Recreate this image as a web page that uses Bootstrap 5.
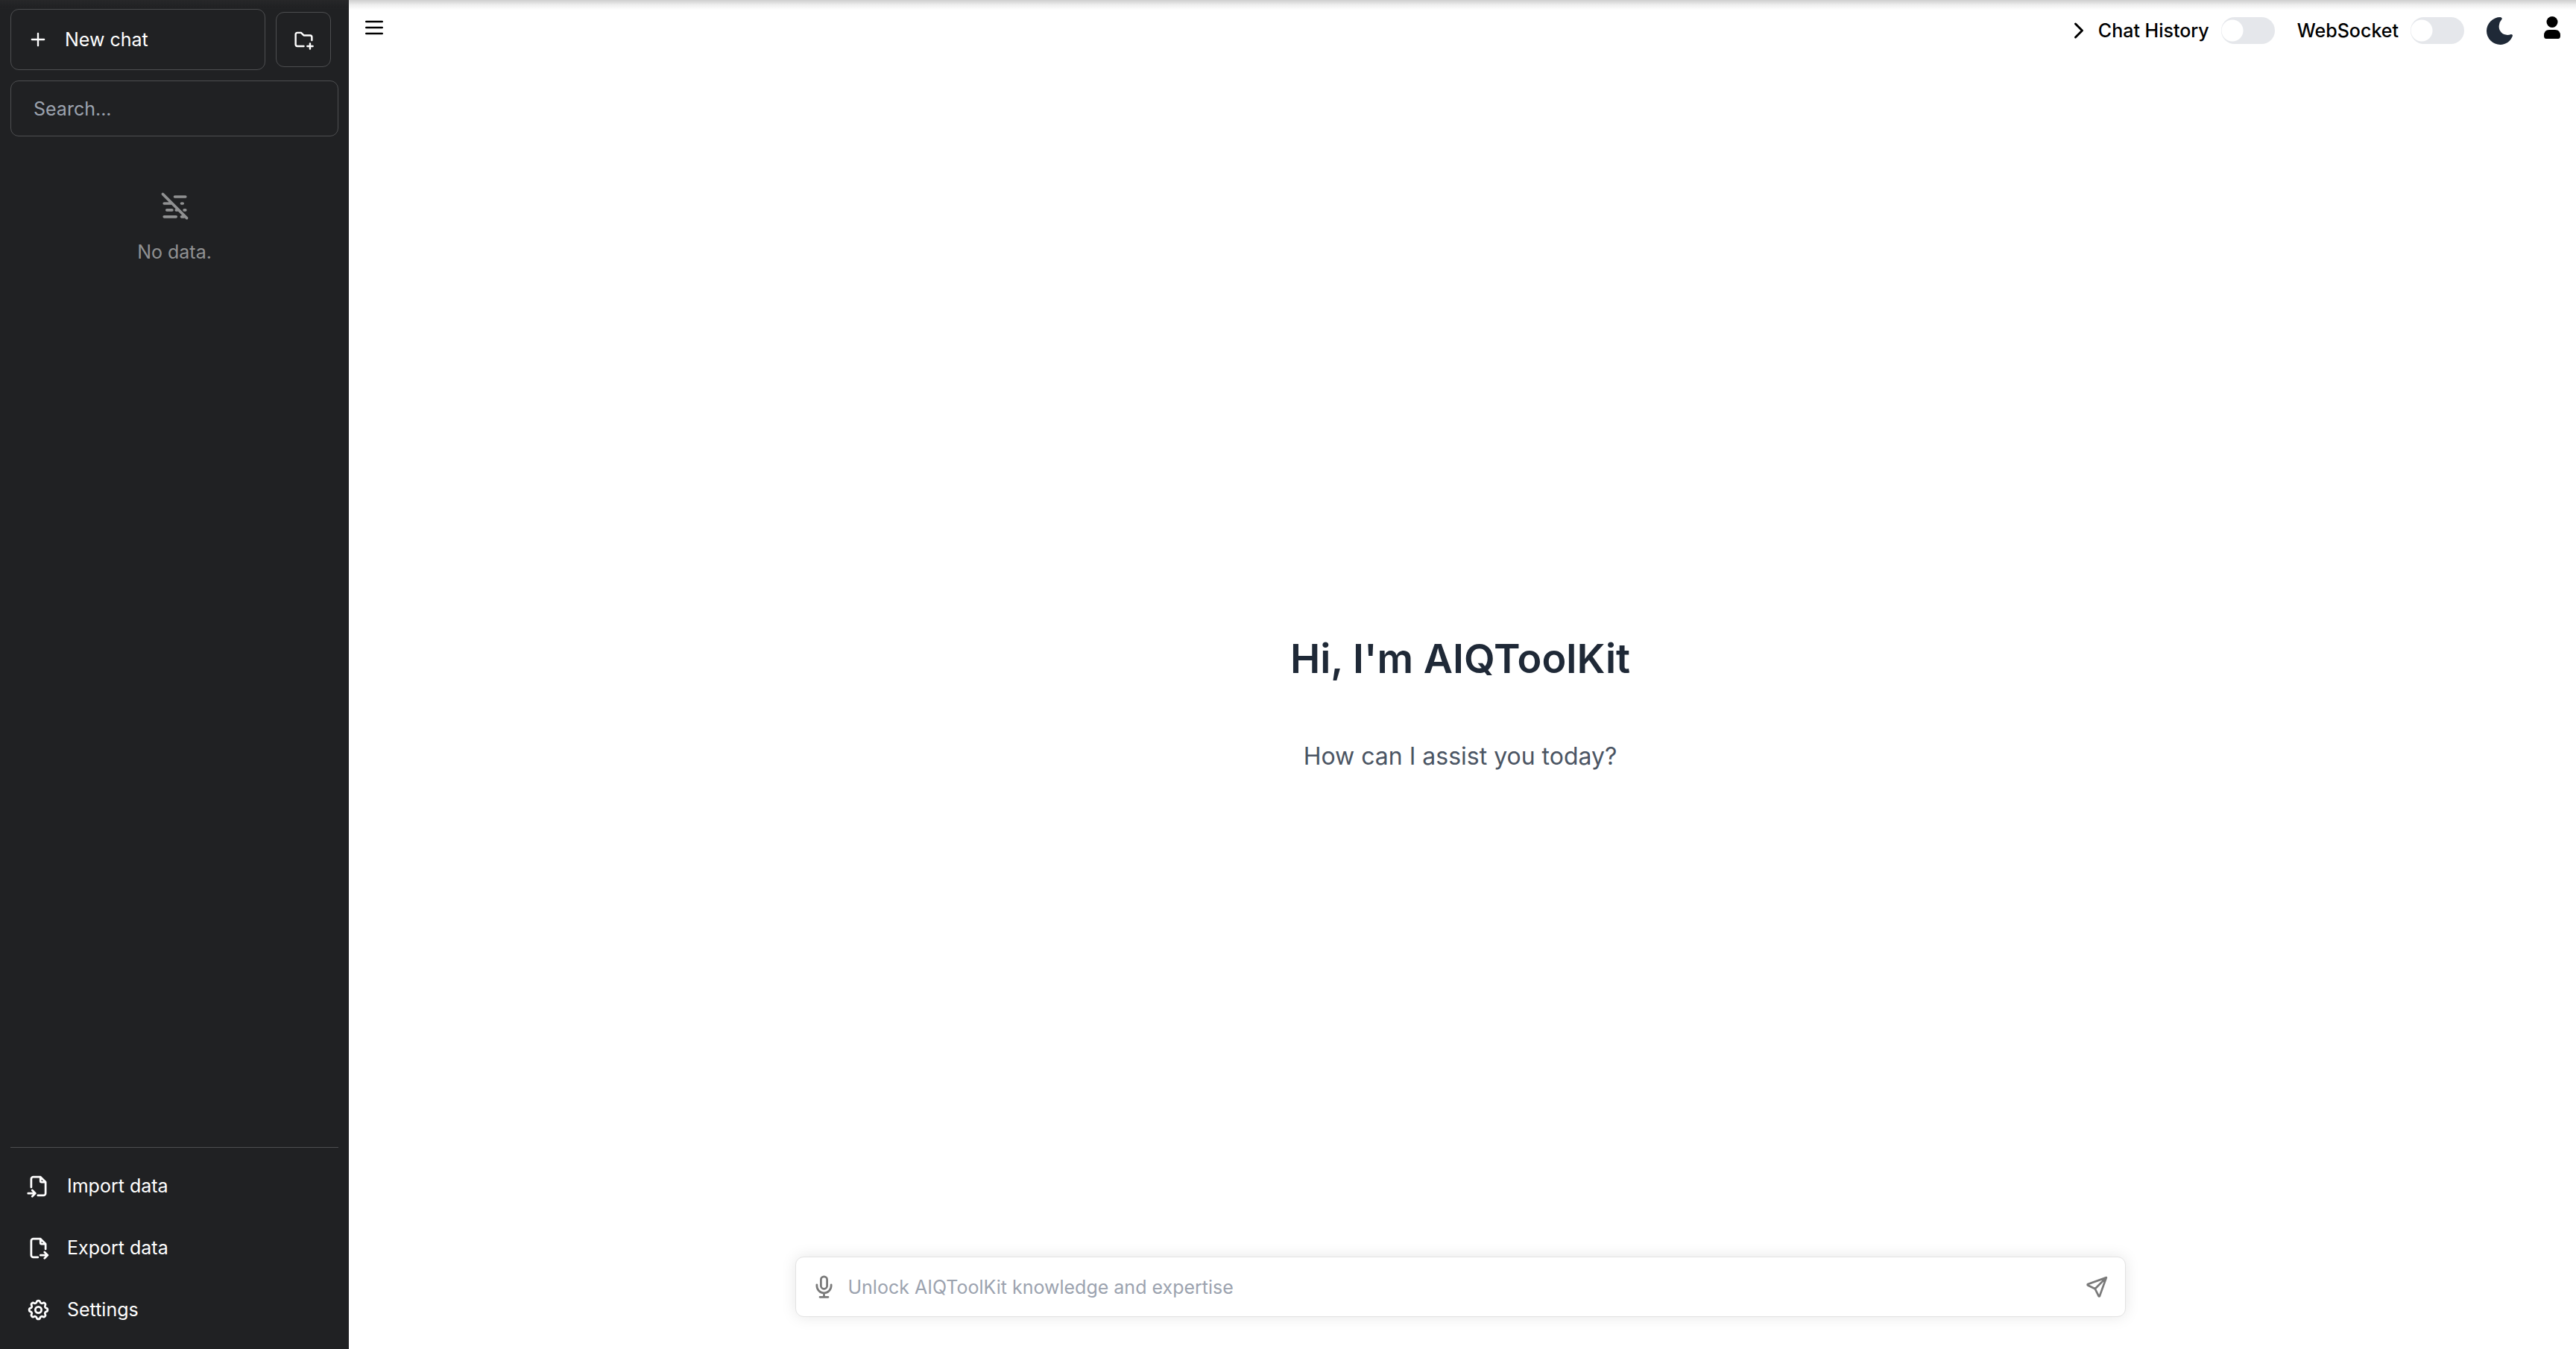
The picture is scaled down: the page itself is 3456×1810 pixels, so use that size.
<!DOCTYPE html>
<html lang="en">
<head>
<meta charset="utf-8">
<meta name="viewport" content="width=device-width, initial-scale=1">
<title>AIQToolKit</title>
<link href="https://cdn.jsdelivr.net/npm/bootstrap@5.3.0/dist/css/bootstrap.min.css" rel="stylesheet">
<style>
body{font-family:Inter,"Liberation Sans",sans-serif;font-size:25px;line-height:36px;color:#000;background:#fff}
svg{display:block;flex:none;fill:none;stroke:currentColor;stroke-width:2;stroke-linecap:round;stroke-linejoin:round}
.solid{fill:currentColor;stroke:none}
.topglow{height:14px;z-index:5;pointer-events:none;background:linear-gradient(rgba(60,60,60,.25),rgba(60,60,60,.08) 50%,rgba(60,60,60,0))}
.sidebar{width:468px;padding:12px 14px 11px;background:#202123;color:#fff}
.actions{gap:14px;margin-bottom:14px}
.outlined{border:1px solid #4d4e50;border-radius:11px;color:#fff;background:transparent;font-size:25px;line-height:36px}
.newchat{width:342px;height:82px;padding:0 22px;gap:22px}
.newfolder{width:74px;height:74px}
.search{height:75px;padding:0 30px}
.search::placeholder,.prompt input::placeholder{color:#9ca3af;opacity:1}
.empty{margin-top:72px;gap:22px;color:#909192}
.tools{border-top:1px solid #4d4e50;padding-top:10px}
.tools .btn{height:83px;padding:0 21px;gap:22px;color:#fff;font-size:25px;border:0}
.topbar{height:82px;padding:0 21px 0 18px}
.plain{border:0;background:none;padding:0;color:inherit}
.switches{gap:30px;font-weight:500}
.moon{color:#1f2937}
.account{margin-left:12px}
.form-switch .form-check-input{width:72px;height:36px;margin:0;border:0;background-color:#e5e7eb;
background-image:radial-gradient(circle at 15px 18px,#fff 14px,rgba(255,255,255,0) 15px);background-position:left center;border-radius:18px}
.hero{padding-top:118px;padding-right:6px;gap:71px}
.hero h1{font-size:54px;line-height:72px;font-weight:600;color:#1f2937}
.hero p{font-size:32px;line-height:48px;color:#4b5563}
.composer{padding:0 6px 43px 0}
.prompt{width:60%;max-width:1785px;height:81px;padding:0 21px;border:1px solid #e3e3e3;border-radius:11px;box-shadow:0 0 20px rgba(0,0,0,.1);color:#7a7a7a}
.prompt input{font-size:25px;line-height:36px;padding:0 16px;height:60px}
</style>
<script src="https://cdn.jsdelivr.net/npm/bootstrap@5.3.0/dist/js/bootstrap.bundle.min.js"></script>
</head>
<body class="d-flex vh-100 overflow-hidden">
<div class="topglow position-fixed top-0 start-0 w-100"></div>
<aside class="sidebar d-flex flex-column flex-shrink-0">
  <div class="actions d-flex align-items-center">
    <button class="outlined newchat d-flex align-items-center" type="button">
      <svg width="28" height="28" viewBox="0 0 24 24"><path d="M12 5v14M5 12h14"/></svg>New chat
    </button>
    <button class="outlined newfolder d-flex align-items-center justify-content-center p-0" type="button" aria-label="New folder">
      <svg width="29" height="29" viewBox="0 0 24 24"><path d="M12 19H5a2 2 0 0 1-2-2V6a2 2 0 0 1 2-2h4l3 3h7a2 2 0 0 1 2 2v3.500M16 19h6M19 16v6"/></svg>
    </button>
  </div>
  <input class="outlined search w-100" type="text" placeholder="Search..." aria-label="Search">
  <div class="empty d-flex flex-column align-items-center">
    <svg width="43" height="43" viewBox="0 0 24 24"><path d="M12 5h8M4 10h6M18 10h-1M6 15h4M14 15h-1M20 15h-1M4 20h9M17 20h2M3 3l18 18"/></svg>
    <span>No data.</span>
  </div>
  <nav class="tools d-flex flex-column mt-auto">
    <button class="btn d-flex align-items-center" type="button">
      <svg width="33" height="33" viewBox="0 0 24 24"><path d="M14 3v4a1 1 0 0 0 1 1h4M5 13V5a2 2 0 0 1 2-2h7l5 5v11a2 2 0 0 1-2 2h-5.500M2 19h7M6 16l3 3-3 3"/></svg>Import data
    </button>
    <button class="btn d-flex align-items-center" type="button">
      <svg width="33" height="33" viewBox="0 0 24 24"><path d="M14 3v4a1 1 0 0 0 1 1h4M11.500 21H7a2 2 0 0 1-2-2V5a2 2 0 0 1 2-2h7l5 5v5M14 19h7M18 16l3 3-3 3"/></svg>Export data
    </button>
    <button class="btn d-flex align-items-center" type="button">
      <svg width="33" height="33" viewBox="0 0 24 24"><path d="M10.325 4.317c.426-1.756 2.924-1.756 3.350 0a1.724 1.724 0 0 0 2.573 1.066c1.543-.94 3.310.826 2.370 2.370a1.724 1.724 0 0 0 1.065 2.572c1.756.426 1.756 2.924 0 3.350a1.724 1.724 0 0 0-1.066 2.573c.94 1.543-.826 3.310-2.370 2.370a1.724 1.724 0 0 0-2.572 1.065c-.426 1.756-2.924 1.756-3.350 0a1.724 1.724 0 0 0-2.573-1.066c-1.543.94-3.310-.826-2.370-2.370a1.724 1.724 0 0 0-1.065-2.572c-1.756-.426-1.756-2.924 0-3.350a1.724 1.724 0 0 0 1.066-2.573c-.94-1.543.826-3.310 2.370-2.370 1 .608 2.296.070 2.572-1.065z"/><circle cx="12" cy="12" r="3"/></svg>Settings
    </button>
  </nav>
</aside>
<main class="d-flex flex-column flex-grow-1">
  <header class="topbar d-flex align-items-center justify-content-between">
    <button class="plain pb-2" type="button" aria-label="Toggle sidebar"><svg width="32" height="32" viewBox="0 0 24 24"><path d="M4 6h16M4 12h16M4 18h16"/></svg></button>
    <div class="switches d-flex align-items-center">
      <div class="d-flex align-items-center">
        <button class="plain" type="button" aria-label="Expand"><svg width="36" height="36" viewBox="0 0 24 24"><path d="M9 6l6 6-6 6"/></svg></button>
        <div class="form-switch d-flex align-items-center gap-3 p-0 ms-2"><label for="history">Chat History</label><input class="form-check-input" type="checkbox" role="switch" id="history"></div>
      </div>
      <div class="form-switch d-flex align-items-center gap-3 p-0"><label for="socket">WebSocket</label><input class="form-check-input" type="checkbox" role="switch" id="socket"></div>
      <button class="plain moon" type="button" aria-label="Dark mode"><svg class="solid" width="35" height="37" viewBox="0 0 35 37"><path d="M18.500 0A18.500 18.500 0 0 0 0 18.500 18.500 18.500 0 0 0 18.500 37C26 37 32.500 32 34.800 25.500Q35.500 23 33 23C23 26.500 15.500 19 16.800 11Q17.300 6.500 20.500 2.800Q21.500.5 18.500 0z"/></svg></button>
      <button class="plain account pb-2" type="button" aria-label="Account"><svg class="solid" width="22" height="30" viewBox="0 0 22 30"><circle cx="11" cy="7.500" r="7.500"/><path d="M0 26q0-8 7-8h8q7 0 7 8 0 4-3 4H3q-3 0-3-4z"/></svg></button>
    </div>
  </header>
  <section class="hero d-flex flex-column flex-grow-1 align-items-center justify-content-center">
    <h1 class="m-0">Hi, I'm AIQToolKit</h1>
    <p class="m-0">How can I assist you today?</p>
  </section>
  <footer class="composer d-flex justify-content-center">
    <form class="prompt d-flex align-items-center bg-white">
      <button class="plain" type="button" aria-label="Voice input"><svg width="33" height="33" viewBox="0 0 24 24"><rect x="9" y="2" width="6" height="12" rx="3"/><path d="M5 10v1a7 7 0 0 0 14 0v-1M12 18v4M8 22h8"/></svg></button>
      <input class="form-control border-0 shadow-none bg-transparent" type="text" placeholder="Unlock AIQToolKit knowledge and expertise" aria-label="Message">
      <button class="plain" type="submit" aria-label="Send"><svg width="33" height="33" viewBox="0 0 24 24"><path d="M10 14L21 3M21 3l-6.500 18a.55.55 0 0 1-1 0L10 14l-7-3.500a.55.55 0 0 1 0-1z"/></svg></button>
    </form>
  </footer>
</main>
</body>
</html>
